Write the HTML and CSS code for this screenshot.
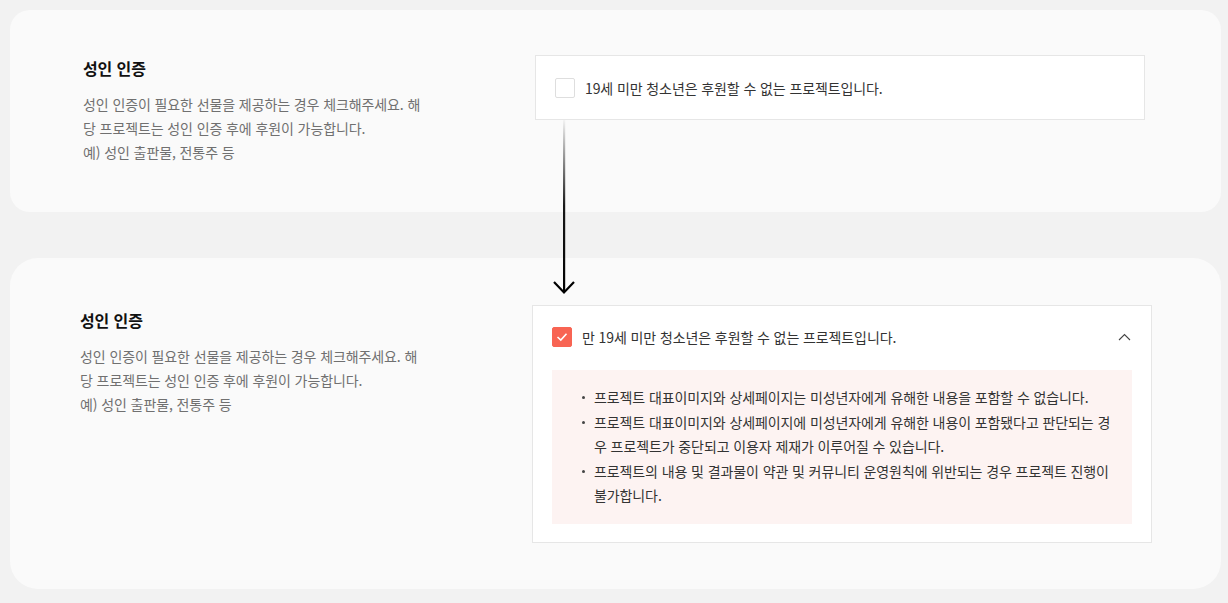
FILE: index.html
```html
<!DOCTYPE html>
<html lang="ko">
<head>
  <meta charset="UTF-8" />
  <meta name="viewport" content="width=device-width, initial-scale=1.0"/>
  <title>성인 인증</title>
  <link rel="stylesheet" href="styles.css">
</head>
<body>
  <div class="page">
    <section class="card card-before">
      <div class="info">
        <h3>성인 인증</h3>
        <p>성인 인증이 필요한 선물을 제공하는 경우 체크해주세요. 해당 프로젝트는 성인 인증 후에 후원이 가능합니다.<br>예) 성인 출판물, 전통주 등</p>
      </div>
      <div class="option">
        <label class="check-row">
          <span class="checkbox"></span>
          <span>19세 미만 청소년은 후원할 수 없는 프로젝트입니다.</span>
        </label>
      </div>
    </section>

    <svg class="flow-arrow" width="30" height="176" viewBox="0 0 30 176">
      <defs>
        <linearGradient id="fade" gradientUnits="userSpaceOnUse" x1="0" y1="0" x2="0" y2="172">
          <stop offset="0" stop-color="#000" stop-opacity="0.03"/>
          <stop offset="0.5" stop-color="#000" stop-opacity="0.9"/>
          <stop offset="1" stop-color="#000"/>
        </linearGradient>
      </defs>
      <rect x="14" y="0" width="2.2" height="172" fill="url(#fade)"/>
      <polyline points="5,162 15,172.5 25,162" fill="none" stroke="#000" stroke-width="2.2"/>
    </svg>

    <section class="card card-after">
      <div class="info">
        <h3>성인 인증</h3>
        <p>성인 인증이 필요한 선물을 제공하는 경우 체크해주세요. 해당 프로젝트는 성인 인증 후에 후원이 가능합니다.<br>예) 성인 출판물, 전통주 등</p>
      </div>
      <div class="option option-open">
        <div class="check-row">
          <span class="checkbox checked">
            <svg width="12" height="10" viewBox="0 0 12 10"><polyline points="1.5,5 4.8,8 10.5,1.8" fill="none" stroke="#fff" stroke-width="1.6"/></svg>
          </span>
          <span>만 19세 미만 청소년은 후원할 수 없는 프로젝트입니다.</span>
          <svg class="chevron" width="13" height="8" viewBox="0 0 13 8"><polyline points="1,7 6.5,1.5 12,7" fill="none" stroke="#444" stroke-width="1.1"/></svg>
        </div>
        <ul class="notice">
          <li>프로젝트 대표이미지와 상세페이지는 미성년자에게 유해한 내용을 포함할 수 없습니다.</li>
          <li>프로젝트 대표이미지와 상세페이지에 미성년자에게 유해한 내용이 포함됐다고 판단되는 경우 프로젝트가 중단되고 이용자 제재가 이루어질 수 있습니다.</li>
          <li>프로젝트의 내용 및 결과물이 약관 및 커뮤니티 운영원칙에 위반되는 경우 프로젝트 진행이 불가합니다.</li>
        </ul>
      </div>
    </section>
  </div>
</body>
</html>
```

FILE: styles.css
```css
* {
  box-sizing: border-box;
  margin: 0;
  padding: 0;
}

body {
  background: #f2f2f2;
  font-family: "Noto Sans CJK KR", "Noto Sans", sans-serif;
  color: #333;
  letter-spacing: -0.1px;
}

.page {
  position: relative;
  padding: 10px 0 0 10px;
}

.card {
  width: 1211px;
  background: #fafafa;
  display: flex;
  justify-content: space-between;
  align-items: flex-start;
}

.card-before {
  height: 202px;
  border-radius: 20px;
  padding: 45px 76px 0 73px;
}

.card-after {
  height: 331px;
  margin-top: 46px;
  border-radius: 28px;
  padding: 47px 69px 0 70px;
}

.info {
  width: 350px;
  padding-top: 1px;
}

.card-after .info {
  padding-top: 3px;
}

.info h3 {
  font-size: 16px;
  line-height: 24px;
  font-weight: 700;
  color: #111;
  margin-bottom: 12px;
}

.info p {
  font-size: 14px;
  line-height: 24px;
  color: #707070;
  word-break: break-all;
}

.option {
  background: #fff;
  border: 1px solid #e6e6e6;
}

.card-before .option {
  width: 610px;
  height: 65px;
  padding: 22px 19px;
}

.option-open {
  width: 620px;
  height: 238px;
  padding: 21px 19px 19px;
}

.check-row {
  display: flex;
  align-items: center;
  gap: 10px;
  font-size: 14px;
  line-height: 20px;
  color: #333;
}

.checkbox {
  width: 20px;
  height: 20px;
  border: 1px solid #dedede;
  border-radius: 2px;
  background: #fff;
  display: flex;
  align-items: center;
  justify-content: center;
  flex-shrink: 0;
}

.checkbox.checked {
  background: #f86453;
  border-color: #f86453;
}

.chevron {
  margin-left: auto;
  margin-right: 1px;
}

.notice {
  list-style: none;
  margin-top: 23px;
  background: #fdf3f2;
  padding: 15px 12px 16px 42px;
  font-size: 14px;
  line-height: 24.5px;
  color: #333;
  word-break: break-all;
}

.notice li {
  position: relative;
}

.notice li::before {
  content: "";
  position: absolute;
  left: -12px;
  top: 11px;
  width: 3px;
  height: 3px;
  border-radius: 50%;
  background: #444;
}

.flow-arrow {
  position: absolute;
  left: 549px;
  top: 120px;
}
```
